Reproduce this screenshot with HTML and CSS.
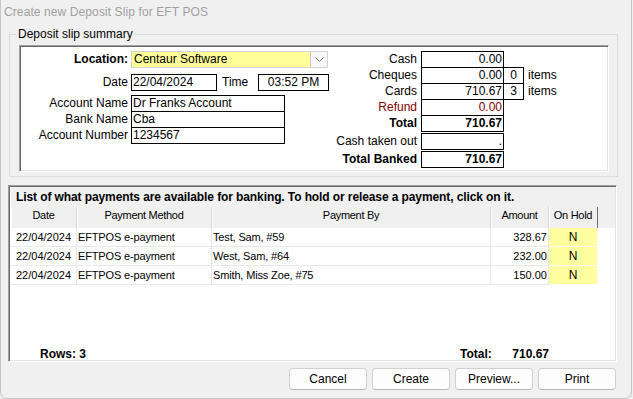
FILE: index.html
```html
<!DOCTYPE html>
<html lang="en">
<head>
  <meta charset="UTF-8" />
  <meta name="viewport" content="width=device-width, initial-scale=1" />
  <title>Create new Deposit Slip for EFT POS</title>
  <link rel="stylesheet" href="styles.css">
</head>
<body>
  <div class="window">
    <div class="titlebar">Create new Deposit Slip for EFT POS</div>

    <fieldset class="summary">
      <legend>Deposit slip summary</legend>
      <div class="summary-panel">
        <div class="details">
          <div class="drow">
            <label class="dlabel bold" for="location">Location:</label>
            <div class="combo" id="location">
              <span class="combo-text">Centaur Software</span>
              <span class="combo-btn">
                <svg width="9" height="6" viewBox="0 0 9 6"><path d="M0.5 0.5 L4.5 4.5 L8.5 0.5" fill="none" stroke="#6a6a6a" stroke-width="1"/></svg>
              </span>
            </div>
          </div>

          <div class="drow date-row">
            <span class="dlabel">Date</span>
            <span class="box date-box">22/04/2024</span>
            <span class="time-label">Time</span>
            <span class="box time-box">03:52 PM</span>
          </div>

          <div class="account">
            <div class="drow">
              <span class="dlabel">Account Name</span>
              <span class="box acct-box">Dr Franks Account</span>
            </div>
            <div class="drow">
              <span class="dlabel">Bank Name</span>
              <span class="box acct-box">Cba</span>
            </div>
            <div class="drow">
              <span class="dlabel">Account Number</span>
              <span class="box acct-box">1234567</span>
            </div>
          </div>
        </div>

        <div class="totals">
          <div class="trow">
            <span class="tlabel">Cash</span>
            <span class="box tval">0.00</span>
          </div>
          <div class="trow">
            <span class="tlabel">Cheques</span>
            <span class="box tval">0.00</span>
            <span class="box tcount">0</span>
            <span class="tunit">items</span>
          </div>
          <div class="trow">
            <span class="tlabel">Cards</span>
            <span class="box tval">710.67</span>
            <span class="box tcount">3</span>
            <span class="tunit">items</span>
          </div>
          <div class="trow refund">
            <span class="tlabel">Refund</span>
            <span class="box tval">0.00</span>
          </div>
          <div class="trow bold">
            <span class="tlabel">Total</span>
            <span class="box tval">710.67</span>
          </div>
          <div class="trow spaced">
            <span class="tlabel">Cash taken out</span>
            <span class="box tval">.</span>
          </div>
          <div class="trow spaced bold">
            <span class="tlabel">Total Banked</span>
            <span class="box tval">710.67</span>
          </div>
        </div>
      </div>
    </fieldset>

    <div class="payments">
      <div class="payments-title">List of what payments are available for banking. To hold or release a payment, click on it.</div>
      <table class="list">
        <colgroup>
          <col class="c-date">
          <col class="c-method">
          <col class="c-by">
          <col class="c-amount">
          <col class="c-hold">
          <col>
        </colgroup>
        <thead>
          <tr>
            <th>Date</th>
            <th>Payment Method</th>
            <th>Payment By</th>
            <th>Amount</th>
            <th class="last">On Hold</th>
            <th class="filler"></th>
          </tr>
        </thead>
        <tbody>
          <tr>
            <td class="center">22/04/2024</td>
            <td class="text">EFTPOS e-payment</td>
            <td class="text">Test, Sam, #59</td>
            <td class="num">328.67</td>
            <td class="hold">N</td>
            <td class="filler"></td>
          </tr>
          <tr>
            <td class="center">22/04/2024</td>
            <td class="text">EFTPOS e-payment</td>
            <td class="text">West, Sam, #64</td>
            <td class="num">232.00</td>
            <td class="hold">N</td>
            <td class="filler"></td>
          </tr>
          <tr>
            <td class="center">22/04/2024</td>
            <td class="text">EFTPOS e-payment</td>
            <td class="text">Smith, Miss Zoe, #75</td>
            <td class="num">150.00</td>
            <td class="hold">N</td>
            <td class="filler"></td>
          </tr>
        </tbody>
      </table>
      <div class="payments-footer">
        <span>Rows: 3</span>
        <div class="footer-total">
          <span>Total:</span>
          <span>710.67</span>
        </div>
      </div>
    </div>

    <div class="buttons">
      <button class="button">Cancel</button>
      <button class="button">Create</button>
      <button class="button">Preview...</button>
      <button class="button">Print</button>
    </div>
  </div>
</body>
</html>
```

FILE: styles.css
```css
* {
  box-sizing: border-box;
}
body {
  margin: 0;
  font-family: 'Liberation Sans', Arial, sans-serif;
  font-size: 12px;
  color: #000;
  background: #f0f0f0;
}
.bold {
  font-weight: bold;
}
.window {
  width: 632px;
  height: 399px;
  border: 1px solid #c6c6c6;
  border-top: none;
  border-radius: 0 0 7px 7px;
  display: flex;
  flex-direction: column;
}
.titlebar {
  height: 27px;
  padding: 4px 0 0 3px;
  color: #a0a0a0;
  line-height: 16px;
  letter-spacing: 0.1px;
}

/* deposit slip summary group */
.summary {
  margin: 0 0 0 8px;
  width: 609px;
  padding: 4px 8px 4px 9px;
  border: 1px solid #dcdcdc;
}
.summary legend {
  padding: 0 1px;
  margin-left: -2px;
  line-height: 14px;
}
.summary-panel {
  height: 127px;
  background: #fff;
  border: 1px solid;
  border-color: #a0a0a0 #fff #fff #a0a0a0;
  box-shadow: inset 1px 1px #696969, inset -1px -1px #e3e3e3;
  display: flex;
}
.box {
  display: block;
  border: 1px solid #000;
  height: 17px;
  line-height: 15px;
  padding: 0 1px;
  white-space: nowrap;
  overflow: hidden;
}
.details {
  width: 313px;
  padding-top: 5px;
}
.drow {
  display: flex;
  gap: 3px;
}
.dlabel {
  width: 108px;
  text-align: right;
  line-height: 17px;
  white-space: nowrap;
}
.combo {
  width: 197px;
  height: 17px;
  background: #ffff99;
  border: 1px solid #d4d4d4;
  display: flex;
  justify-content: space-between;
}
.combo-text {
  line-height: 15px;
  padding-left: 2px;
}
.combo-btn {
  width: 17px;
  background: #f7f7f7;
  border-left: 1px solid #c8c8c8;
  display: flex;
  align-items: center;
  justify-content: center;
}
.date-row {
  margin-top: 6px;
  gap: 0;
}
.date-row .dlabel {
  margin-right: 3px;
}
.date-box {
  width: 86px;
}
.time-label {
  line-height: 17px;
  margin-left: 5px;
  width: 36px;
}
.time-box {
  width: 71px;
  text-align: center;
}
.account {
  margin-top: 4px;
}
.account .drow + .drow {
  margin-top: -1px;
}
.acct-box {
  width: 154px;
}

.totals {
  padding-top: 5px;
}
.trow {
  display: flex;
  height: 17px;
  margin-top: -1px;
}
.trow:first-child {
  margin-top: 0;
}
.trow.spaced {
  margin-top: 1px;
}
.tlabel {
  width: 88px;
  padding-right: 4px;
  text-align: right;
  line-height: 17px;
  white-space: nowrap;
}
.tval {
  width: 83px;
  text-align: right;
}
.tcount {
  width: 21px;
  margin-left: -1px;
  text-align: center;
}
.tunit {
  padding-left: 4px;
  line-height: 17px;
}
.refund .tlabel,
.refund .tval {
  color: #800000;
}

/* payments list */
.payments {
  margin: 8px 0 0 7px;
  width: 609px;
  height: 177px;
  background: #fff;
  border: 1px solid;
  border-color: #a0a0a0 #fff #fff #a0a0a0;
  box-shadow: inset 1px 1px #696969, inset -1px -1px #e3e3e3;
  padding: 1px 1px 0 2px;
  display: flex;
  flex-direction: column;
}
.payments-title {
  height: 20px;
  line-height: 20px;
  padding-left: 5px;
  font-weight: bold;
  letter-spacing: -0.1px;
  background: #f0f0f0;
  white-space: nowrap;
}
.list {
  width: 100%;
  table-layout: fixed;
  border-collapse: separate;
  border-spacing: 0;
  font-size: 11px;
}
.c-date { width: 66px; }
.c-method { width: 135px; }
.c-by { width: 279px; }
.c-amount { width: 58px; }
.c-hold { width: 49px; }
.list th {
  height: 21px;
  padding: 0 0 5px;
  font-weight: normal;
  letter-spacing: -0.3px;
  background: #f0f0f0;
  border-right: 1px solid #d5d5d5;
  box-shadow: inset 1px 0 #fff;
  line-height: 16px;
}
.list th.last {
  border-right-color: #6e6e6e;
}
.list th.filler {
  border: 0;
  box-shadow: none;
}
.list td {
  height: 19px;
  padding: 0 1px;
  border-right: 1px solid #e8e8e8;
  border-bottom: 1px solid #e8e8e8;
  white-space: nowrap;
  overflow: hidden;
}
.list td.text {
  letter-spacing: -0.15px;
}
.list td.filler {
  border: 0;
}
.list .center {
  text-align: center;
}
.list .num {
  text-align: right;
}
.list .hold {
  background: #ffffa0;
  text-align: center;
  font-size: 12px;
  border-right-color: #fff;
  border-bottom-color: #fff;
}
.payments-footer {
  margin-top: auto;
  margin-bottom: -1px;
  height: 16px;
  line-height: 16px;
  padding-left: 29px;
  font-weight: bold;
  display: grid;
  grid-template-columns: 420px 89px;
}
.footer-total {
  display: flex;
  justify-content: space-between;
}

/* dialog buttons */
.buttons {
  display: flex;
  justify-content: flex-end;
  gap: 5px;
  margin-top: 6px;
  padding-right: 15px;
}
.button {
  width: 78px;
  height: 22px;
  font-family: inherit;
  font-size: 12px;
  color: #000;
  background: #fdfdfd;
  border: 1px solid #d0d0d0;
  border-bottom-color: #b8b8b8;
  border-radius: 4px;
  padding: 0;
}
```
